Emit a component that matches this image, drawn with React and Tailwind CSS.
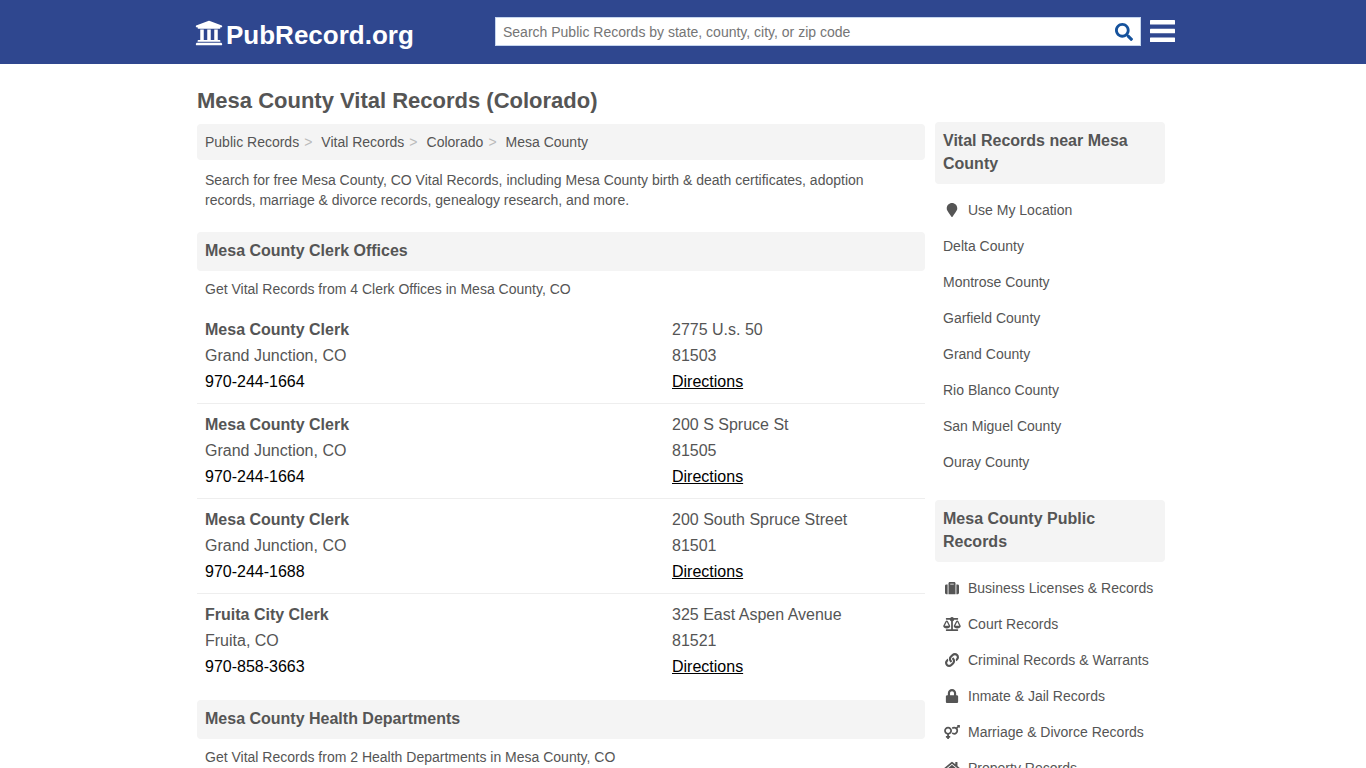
import React, { useState } from 'react';
import {
  FaUniversity,
  FaSearch,
  FaMapMarker,
  FaSuitcase,
  FaBalanceScale,
  FaLink,
  FaLock,
  FaVenusMars,
  FaHome,
} from 'react-icons/fa';

const breadcrumbs = ['Public Records', 'Vital Records', 'Colorado', 'Mesa County'];

const clerks = [
  { name: 'Mesa County Clerk', city: 'Grand Junction, CO', phone: '970-244-1664', street: '2775 U.s. 50', zip: '81503' },
  { name: 'Mesa County Clerk', city: 'Grand Junction, CO', phone: '970-244-1664', street: '200 S Spruce St', zip: '81505' },
  { name: 'Mesa County Clerk', city: 'Grand Junction, CO', phone: '970-244-1688', street: '200 South Spruce Street', zip: '81501' },
  { name: 'Fruita City Clerk', city: 'Fruita, CO', phone: '970-858-3663', street: '325 East Aspen Avenue', zip: '81521' },
];

const nearby = [
  { label: 'Use My Location', icon: FaMapMarker },
  { label: 'Delta County' },
  { label: 'Montrose County' },
  { label: 'Garfield County' },
  { label: 'Grand County' },
  { label: 'Rio Blanco County' },
  { label: 'San Miguel County' },
  { label: 'Ouray County' },
];

const publicRecords = [
  { label: 'Business Licenses & Records', icon: FaSuitcase },
  { label: 'Court Records', icon: FaBalanceScale },
  { label: 'Criminal Records & Warrants', icon: FaLink },
  { label: 'Inmate & Jail Records', icon: FaLock },
  { label: 'Marriage & Divorce Records', icon: FaVenusMars },
  { label: 'Property Records', icon: FaHome },
];

const Header = () => {
  const [query, setQuery] = useState('');

  return (
    <header className="bg-[#2f478f]">
      <div className="mx-auto flex h-16 max-w-[984px] items-center pb-0.5 pl-1">
        <a href="#" className="flex w-[300px] shrink-0 items-center gap-[3px] pt-2 text-[26px] leading-8 font-bold text-white">
          <FaUniversity className="mb-1 size-7" />
          PubRecord.org
        </a>
        <form onSubmit={(e) => e.preventDefault()} className="flex h-[29px] flex-1 items-center border border-[#c5d5ee] bg-white">
          <input
            type="text"
            aria-label="Search public records"
            value={query}
            onChange={(e) => setQuery(e.target.value)}
            placeholder="Search Public Records by state, county, city, or zip code"
            className="min-w-0 flex-1 pt-0.5 pr-2 pl-[7px] text-sm text-[#555] outline-none placeholder:text-[#757575]"
          />
          <button type="submit" aria-label="Search" className="cursor-pointer px-[7px] pt-0.5 text-[#15529c]">
            <FaSearch className="size-[18px]" />
          </button>
        </form>
        <button type="button" aria-label="Menu" className="ml-[9px] cursor-pointer text-white">
          <svg viewBox="0 0 25 22" className="h-[22px] w-[25px]" fill="currentColor">
            <rect width="25" height="4.4" rx="0.5" />
            <rect y="8.8" width="25" height="4.4" rx="0.5" />
            <rect y="17.6" width="25" height="4.4" rx="0.5" />
          </svg>
        </button>
      </div>
    </header>
  );
};

const SectionTitle = ({ children }) => (
  <h2 className="rounded-sm bg-[#f4f4f4] px-2 pt-[7px] pb-[9px] text-base leading-[23px] font-bold">{children}</h2>
);

const OfficeRow = ({ office }) => (
  <li className="flex border-b border-[#eee] p-2 text-base leading-[26px] last:border-b-0">
    <div className="w-[467px] shrink-0">
      <h3 className="font-bold">{office.name}</h3>
      <p>{office.city}</p>
      <a href="#" className="block text-black">{office.phone}</a>
    </div>
    <div>
      <p>{office.street}</p>
      <p>{office.zip}</p>
      <a href="#" className="text-black underline">Directions</a>
    </div>
  </li>
);

const SideList = ({ title, items }) => (
  <section className="mb-5">
    <SectionTitle>{title}</SectionTitle>
    <ul className="mt-2">
      {items.map(({ label, icon: Icon }) => (
        <li key={label}>
          <a href="#" className="flex h-9 items-center px-2 text-sm">
            {Icon && <Icon className="mr-[7px] h-[14px] w-[18px] shrink-0" />}
            {label}
          </a>
        </li>
      ))}
    </ul>
  </section>
);

const App = () => {
  return (
    <div className="bg-white font-['Liberation_Sans',Arial,sans-serif] text-[#555]">
      <Header />
      <div className="mx-auto max-w-[980px] pr-2 pl-1">
        <h1 className="pt-[23px] text-[22px] leading-7 font-bold">Mesa County Vital Records (Colorado)</h1>
        <div className="mt-[7px] flex gap-2.5">
          <main className="min-w-0 flex-1 pt-0.5">
            <nav aria-label="Breadcrumb" className="rounded-sm bg-[#f4f4f4] px-2">
              <ol className="flex h-9 items-center text-sm">
                {breadcrumbs.map((crumb, i) => (
                  <li key={crumb} className="flex">
                    {i > 0 && <span className="mr-[9px] ml-[5px] text-[#bbb]">&gt;</span>}
                    <a href="#">{crumb}</a>
                  </li>
                ))}
              </ol>
            </nav>
            <p className="mt-2.5 mb-[22px] px-2 text-sm">
              Search for free Mesa County, CO Vital Records, including Mesa County birth & death certificates, adoption
              records, marriage & divorce records, genealogy research, and more.
            </p>

            <SectionTitle>Mesa County Clerk Offices</SectionTitle>
            <p className="mt-2 mb-2.5 px-2 text-sm">Get Vital Records from 4 Clerk Offices in Mesa County, CO</p>
            <ul className="mb-3">
              {clerks.map((office, i) => (
                <OfficeRow key={i} office={office} />
              ))}
            </ul>

            <SectionTitle>Mesa County Health Departments</SectionTitle>
            <p className="mt-2 px-2 text-sm">Get Vital Records from 2 Health Departments in Mesa County, CO</p>
          </main>

          <aside className="w-[230px] shrink-0">
            <SideList title="Vital Records near Mesa County" items={nearby} />
            <SideList title="Mesa County Public Records" items={publicRecords} />
          </aside>
        </div>
      </div>
    </div>
  );
};

export default App;
